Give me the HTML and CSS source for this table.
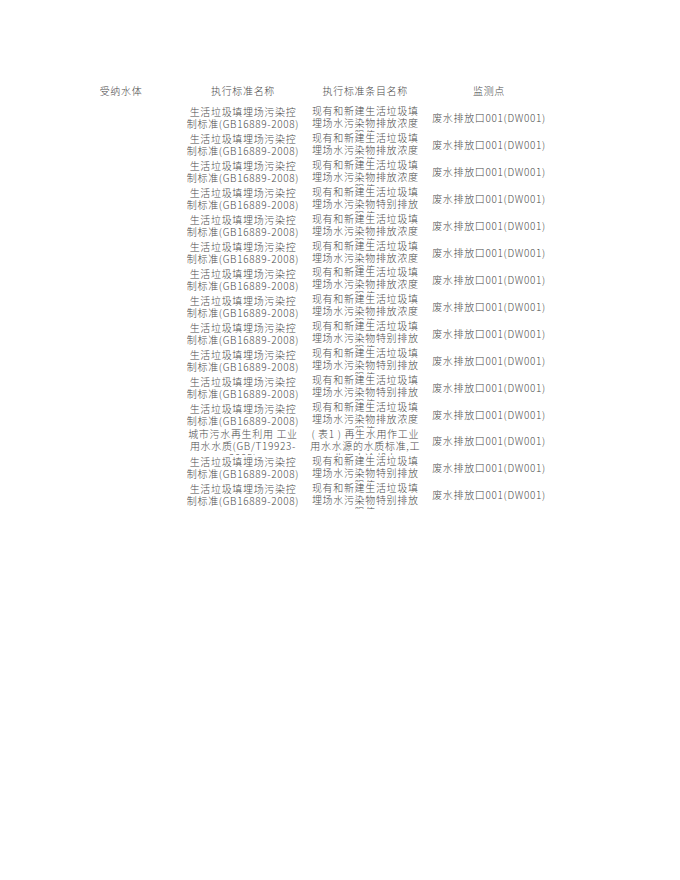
FILE: index.html
```html
<!DOCTYPE html>
<html lang="zh-CN">
<head>
<meta charset="utf-8">
<title>监测点</title>
<link rel="stylesheet" href="styles.css">
</head>
<body>
<div class="sheet">
  <div class="row head">
    <div class="cell">受纳水体</div>
    <div class="cell">执行标准名称</div>
    <div class="cell">执行标准条目名称</div>
    <div class="cell">监测点</div>
  </div>
  <div class="row"><div class="cell"></div><div class="cell">生活垃圾填埋场污染控制标准(GB16889-2008)</div><div class="cell">现有和新建生活垃圾填埋场水污染物排放浓度限值</div><div class="cell">废水排放口001(DW001)</div></div>
  <div class="row"><div class="cell"></div><div class="cell">生活垃圾填埋场污染控制标准(GB16889-2008)</div><div class="cell">现有和新建生活垃圾填埋场水污染物排放浓度限值</div><div class="cell">废水排放口001(DW001)</div></div>
  <div class="row"><div class="cell"></div><div class="cell">生活垃圾填埋场污染控制标准(GB16889-2008)</div><div class="cell">现有和新建生活垃圾填埋场水污染物排放浓度限值</div><div class="cell">废水排放口001(DW001)</div></div>
  <div class="row"><div class="cell"></div><div class="cell">生活垃圾填埋场污染控制标准(GB16889-2008)</div><div class="cell">现有和新建生活垃圾填埋场水污染物特别排放限值</div><div class="cell">废水排放口001(DW001)</div></div>
  <div class="row"><div class="cell"></div><div class="cell">生活垃圾填埋场污染控制标准(GB16889-2008)</div><div class="cell">现有和新建生活垃圾填埋场水污染物排放浓度限值</div><div class="cell">废水排放口001(DW001)</div></div>
  <div class="row"><div class="cell"></div><div class="cell">生活垃圾填埋场污染控制标准(GB16889-2008)</div><div class="cell">现有和新建生活垃圾填埋场水污染物排放浓度限值</div><div class="cell">废水排放口001(DW001)</div></div>
  <div class="row"><div class="cell"></div><div class="cell">生活垃圾填埋场污染控制标准(GB16889-2008)</div><div class="cell">现有和新建生活垃圾填埋场水污染物排放浓度限值</div><div class="cell">废水排放口001(DW001)</div></div>
  <div class="row"><div class="cell"></div><div class="cell">生活垃圾填埋场污染控制标准(GB16889-2008)</div><div class="cell">现有和新建生活垃圾填埋场水污染物排放浓度限值</div><div class="cell">废水排放口001(DW001)</div></div>
  <div class="row"><div class="cell"></div><div class="cell">生活垃圾填埋场污染控制标准(GB16889-2008)</div><div class="cell">现有和新建生活垃圾填埋场水污染物特别排放限值</div><div class="cell">废水排放口001(DW001)</div></div>
  <div class="row"><div class="cell"></div><div class="cell">生活垃圾填埋场污染控制标准(GB16889-2008)</div><div class="cell">现有和新建生活垃圾填埋场水污染物特别排放限值</div><div class="cell">废水排放口001(DW001)</div></div>
  <div class="row"><div class="cell"></div><div class="cell">生活垃圾填埋场污染控制标准(GB16889-2008)</div><div class="cell">现有和新建生活垃圾填埋场水污染物特别排放限值</div><div class="cell">废水排放口001(DW001)</div></div>
  <div class="row"><div class="cell"></div><div class="cell">生活垃圾填埋场污染控制标准(GB16889-2008)</div><div class="cell">现有和新建生活垃圾填埋场水污染物排放浓度限值</div><div class="cell">废水排放口001(DW001)</div></div>
  <div class="row"><div class="cell"></div><div class="cell">城市污水再生利用 工业用水水质(GB/T19923-2005)</div><div class="cell">( 表1 ) 再生水用作工业用水水源的水质标准,工业用水冷却水</div><div class="cell">废水排放口001(DW001)</div></div>
  <div class="row"><div class="cell"></div><div class="cell">生活垃圾填埋场污染控制标准(GB16889-2008)</div><div class="cell">现有和新建生活垃圾填埋场水污染物特别排放限值</div><div class="cell">废水排放口001(DW001)</div></div>
  <div class="row"><div class="cell"></div><div class="cell">生活垃圾填埋场污染控制标准(GB16889-2008)</div><div class="cell">现有和新建生活垃圾填埋场水污染物特别排放限值</div><div class="cell">废水排放口001(DW001)</div></div>
</div>
</body>
</html>
```
FILE: styles.css
```css
html, body {
  margin: 0;
  background: #ffffff;
}
body {
  font-family: "Noto Sans CJK SC", "Noto Sans", sans-serif;
  font-size: 10px;
  font-weight: 300;
  letter-spacing: 0.67px;
  color: #4a4a4a;
}
.sheet {
  padding: 78px 0 0 60px;
}
.row {
  display: grid;
  grid-template-columns: 122px 122px 122.5px 125px;
  height: 26.93px;
  align-items: center;
}
.cell {
  padding: 0 3px;
  text-align: center;
  line-height: 12px;
  max-height: 27px;
  overflow: hidden;
}
```
